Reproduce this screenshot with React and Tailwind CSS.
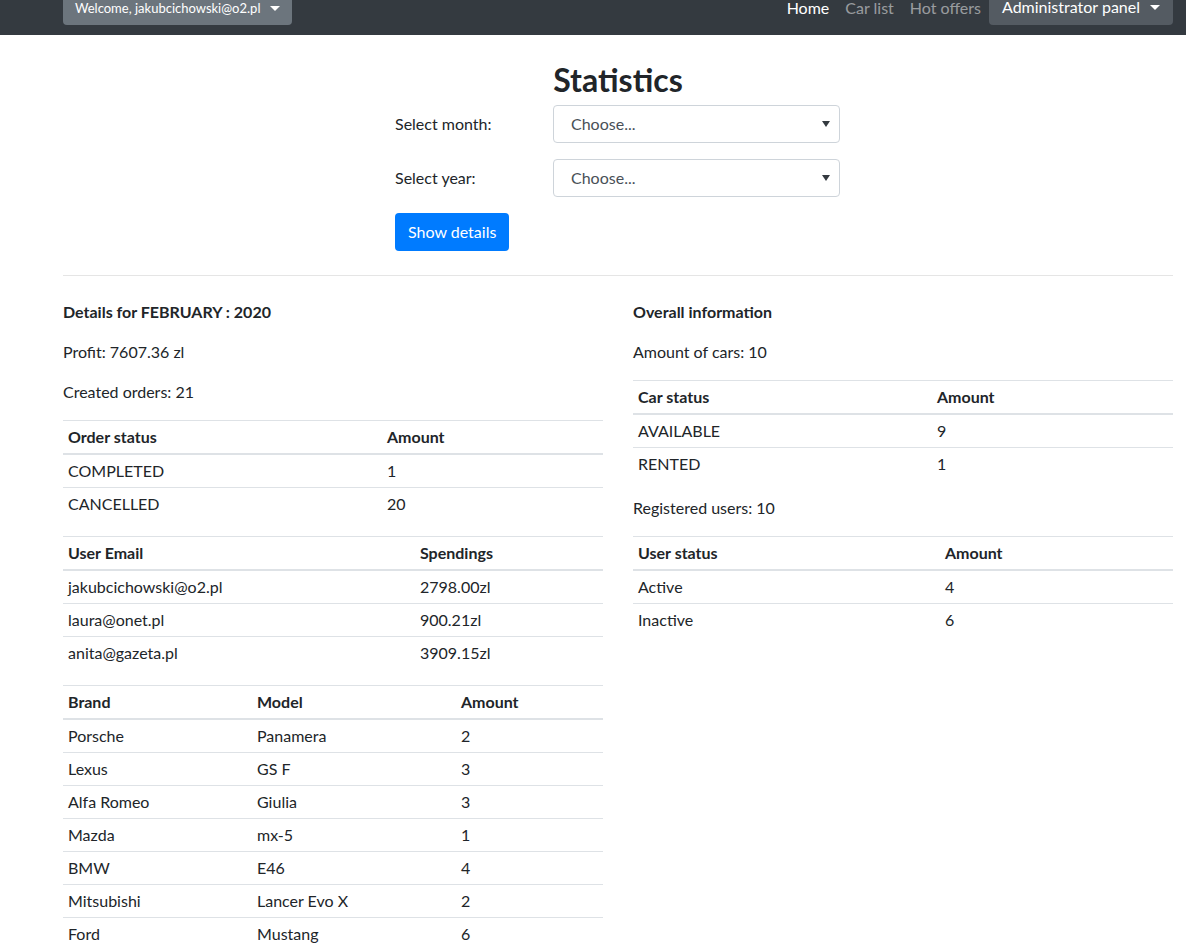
import React from 'react';

const orderStatus = [
    ['COMPLETED', '1'],
    ['CANCELLED', '20'],
];

const spendings = [
    ['jakubcichowski@o2.pl', '2798.00zl'],
    ['laura@onet.pl', '900.21zl'],
    ['anita@gazeta.pl', '3909.15zl'],
];

const cars = [
    ['Porsche', 'Panamera', '2'],
    ['Lexus', 'GS F', '3'],
    ['Alfa Romeo', 'Giulia', '3'],
    ['Mazda', 'mx-5', '1'],
    ['BMW', 'E46', '4'],
    ['Mitsubishi', 'Lancer Evo X', '2'],
    ['Ford', 'Mustang', '6'],
];

const carStatus = [
    ['AVAILABLE', '9'],
    ['RENTED', '1'],
];

const userStatus = [
    ['Active', '4'],
    ['Inactive', '6'],
];

function Caret() {
    return <span className="ml-[10px] block h-0 w-0 border-x-[5px] border-t-[5px] border-x-transparent border-t-white" />;
}

// simple bootstrap-like "table table-sm"
function Table({ headers, rows, widths }) {
    return (
        <table className="mb-4 w-full border-collapse text-left">
            <thead>
                <tr className="border-t border-b-2 border-[#dee2e6]">
                    {headers.map((h, i) => (
                        <th key={h} className={`px-[5px] py-1 font-bold leading-6 ${widths[i] || ''}`}>{h}</th>
                    ))}
                </tr>
            </thead>
            <tbody>
                {rows.map((r, ri) => (
                    <tr key={ri} className="border-t border-[#dee2e6]">
                        {r.map((c, ci) => (
                            <td key={ci} className="px-[5px] py-1 leading-6">{c}</td>
                        ))}
                    </tr>
                ))}
            </tbody>
        </table>
    );
}

function SelectBox() {
    return (
        <div className="flex h-[38px] w-[287px] items-center justify-between rounded border border-[#ced4da] bg-white pl-[17px] pr-[9px] text-[#495057]">
            <span>Choose...</span>
            <svg width="8" height="6" viewBox="0 0 8 6"><path d="M0 0h8L4 6z" fill="#343a40" /></svg>
        </div>
    );
}

export default function App() {
    return (
        <div className="min-h-[949px] bg-white text-[16px] text-[#212529]" style={{ fontFamily: 'Lato, "Open Sans", sans-serif' }}>
            {/* Navbar */}
            <nav className="flex h-[35px] items-start bg-[#343a40] pl-[63px] pr-[13px]">
                <button className="-mt-[10px] flex h-[35px] items-end rounded bg-[#6c757d] pb-[7px] pl-[12px] pr-[12px] text-white">
                    <span className="flex items-center text-[13px] leading-5">
                        Welcome, jakubcichowski@o2.pl <Caret />
                    </span>
                </button>
                <div className="ml-auto flex items-start">
                    <a className="-mt-[4px] px-2 leading-6 text-white">Home</a>
                    <a className="-mt-[4px] px-2 leading-6 text-white/50">Car list</a>
                    <a className="-mt-[4px] px-2 leading-6 text-white/50">Hot offers</a>
                    <button className="-mt-[14px] flex h-[39px] items-end rounded bg-[#545b62] pb-[6px] pl-[13px] pr-[13px] text-white">
                        <span className="flex items-center leading-6">
                            Administrator panel <Caret />
                        </span>
                    </button>
                </div>
            </nav>

            <div className="pl-[63px] pr-[13px]">
                <h2 className="mt-[25px] text-center text-[32px] font-bold leading-[40px]">Statistics</h2>

                <div className="ml-[332px] mt-[5px] w-[445px]">
                    <div className="mb-4 flex items-center">
                        <label className="w-[158px]">Select month:</label>
                        <SelectBox />
                    </div>
                    <div className="mb-4 flex items-center">
                        <label className="w-[158px]">Select year:</label>
                        <SelectBox />
                    </div>
                    <button className="h-[38px] rounded bg-[#007bff] px-[13px] leading-6 text-white">Show details</button>
                </div>

                <hr className="mt-[24px] border-t border-[#e5e5e5]" />

                <div className="mt-[24px] grid grid-cols-2 gap-[30px]">
                    <div>
                        <h6 className="mb-4 font-bold leading-6">Details for FEBRUARY : 2020</h6>
                        <p className="mb-4 leading-6">Profit: 7607.36 zl</p>
                        <p className="mb-4 leading-6">Created orders: 21</p>
                        <Table headers={['Order status', 'Amount']} rows={orderStatus} widths={['w-[319px]']} />
                        <Table headers={['User Email', 'Spendings']} rows={spendings} widths={['w-[352px]']} />
                        <Table headers={['Brand', 'Model', 'Amount']} rows={cars} widths={['w-[189px]', 'w-[204px]']} />
                    </div>
                    <div>
                        <h6 className="mb-4 font-bold leading-6">Overall information</h6>
                        <p className="mb-4 leading-6">Amount of cars: 10</p>
                        <Table headers={['Car status', 'Amount']} rows={carStatus} widths={['w-[299px]']} />
                        <p className="mb-4 leading-6">Registered users: 10</p>
                        <Table headers={['User status', 'Amount']} rows={userStatus} widths={['w-[307px]']} />
                    </div>
                </div>
            </div>
        </div>
    );
}
